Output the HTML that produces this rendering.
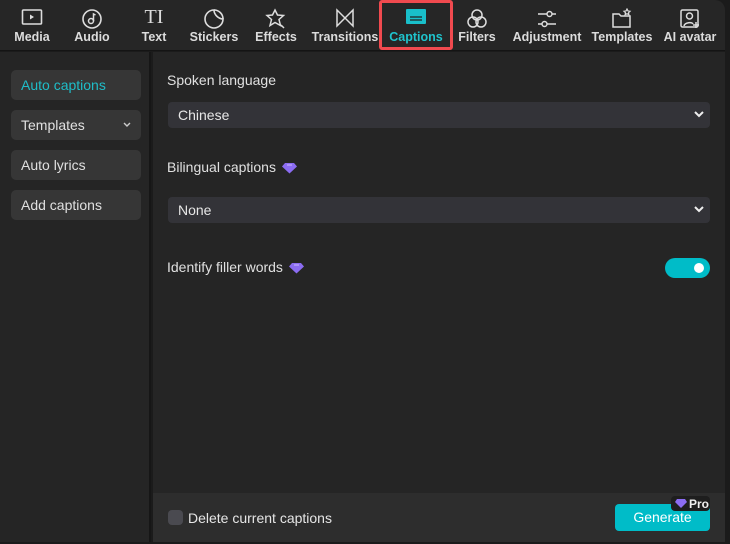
<!DOCTYPE html>
<html><head><meta charset="utf-8"><style>
*{margin:0;padding:0;box-sizing:border-box}
body{width:730px;height:544px;background:#1b1b1b;font-family:"Liberation Sans",Arial,sans-serif;position:relative;overflow:hidden;color:#e6e6e6}
.top{position:absolute;left:0;top:0;width:725px;height:51px;background:#262626;border-top-right-radius:10px;border-bottom:1px solid #141414}
.tab{position:absolute;top:0;height:51px;text-align:center;font-size:12.5px;font-weight:bold;color:#dcdcdc}
.tab svg{position:absolute;left:50%;top:8px;transform:translateX(-50%)}
.tab span{position:absolute;top:30px;left:0;right:0;white-space:nowrap}
.side{position:absolute;left:0;top:52px;width:151px;height:490px;background:#252525;border-right:2px solid #161616}
.sb{position:absolute;left:11px;width:130px;height:30px;background:#363636;border-radius:5px;font-size:14px;padding:7px 0 0 10px;color:#e0e0e0}
.main{position:absolute;left:153px;top:52px;width:572px;height:441px;background:#252525}
.lbl{position:absolute;left:14px;font-size:14px;color:#e0e0e0}
.sel{position:absolute;left:15px;width:542px;height:26px;background:#333338;border-radius:4px;font-size:14px;padding:5px 0 0 10px;color:#e6e6e6}
.sel svg{position:absolute;right:6px;top:9px}
.bot{position:absolute;left:153px;top:493px;width:572px;height:49px;background:#2d2d2d}
.gem{display:inline-block;vertical-align:middle;margin-left:6px}
</style></head><body>
<div class="top">
 <div class="tab" style="left:9px;width:46px"><svg width="22" height="18" viewBox="0 0 22 18"><rect x="1.5" y="2" width="19" height="14" fill="none" stroke="#ddd" stroke-width="1.6" rx="1"/><path d="M9 6.5v5l4-2.5z" fill="#ddd"/></svg><span>Media</span></div>
 <div class="tab" style="left:70px;width:44px"><svg width="22" height="22" viewBox="0 0 22 22"><circle cx="11" cy="11" r="9" fill="none" stroke="#ddd" stroke-width="1.6"/><circle cx="10" cy="13" r="2.5" fill="none" stroke="#ddd" stroke-width="1.5"/><path d="M12.5 13V6l2 1" fill="none" stroke="#ddd" stroke-width="1.5"/></svg><span>Audio</span></div>
 <div class="tab" style="left:135px;width:38px"><span style="top:6px;font-family:'Liberation Serif',serif;font-weight:normal;font-size:20px">TI</span><span>Text</span></div>
 <div class="tab" style="left:188px;width:52px"><svg width="22" height="22" viewBox="0 0 22 22"><path d="M11 2a9 9 0 1 0 9 9c-4 0-9-4-9-9z" fill="none" stroke="#ddd" stroke-width="1.6"/><path d="M11 2c5 0 9 4 9 9" fill="none" stroke="#ddd" stroke-width="1.6"/></svg><span>Stickers</span></div>
 <div class="tab" style="left:253px;width:46px"><svg width="22" height="22" viewBox="0 0 22 22"><path d="M10 2l2.5 5 6 .5-4.5 4 1.5 6-5.5-3-5 3 1.5-6L2 7.5l5.5-.5z" fill="none" stroke="#ddd" stroke-width="1.5"/><path d="M16 17l3 3" stroke="#ddd" stroke-width="1.5"/></svg><span>Effects</span></div>
 <div class="tab" style="left:311px;width:68px"><svg width="22" height="20" viewBox="0 0 22 20"><path d="M3 2v16l16-16v16z" fill="none" stroke="#ddd" stroke-width="1.5"/></svg><span>Transitions</span></div>
 <div class="tab" style="left:379px;width:74px;height:50px;border:3px solid #f04a4f;border-radius:3px;color:#1fc3cc"><svg width="22" height="18" viewBox="0 0 22 18" style="top:5px"><rect x="1" y="1" width="20" height="15" fill="#19bfca" rx="1"/><path d="M5 9h12M5 12h12" stroke="#222" stroke-width="1.2"/></svg><span style="top:27px">Captions</span></div>
 <div class="tab" style="left:456px;width:42px"><svg width="22" height="22" viewBox="0 0 22 22"><circle cx="11" cy="7" r="5" fill="none" stroke="#ddd" stroke-width="1.5"/><circle cx="7" cy="14" r="5" fill="none" stroke="#ddd" stroke-width="1.5"/><circle cx="15" cy="14" r="5" fill="none" stroke="#ddd" stroke-width="1.5"/></svg><span>Filters</span></div>
 <div class="tab" style="left:511px;width:72px"><svg width="22" height="22" viewBox="0 0 22 22"><path d="M2 6h9M16 6h4M2 16h4M11 16h9" stroke="#ddd" stroke-width="1.5"/><circle cx="13.5" cy="6" r="2.5" fill="none" stroke="#ddd" stroke-width="1.5"/><circle cx="8.5" cy="16" r="2.5" fill="none" stroke="#ddd" stroke-width="1.5"/></svg><span>Adjustment</span></div>
 <div class="tab" style="left:590px;width:64px"><svg width="22" height="22" viewBox="0 0 22 22"><path d="M2 6h6l2 2h9v11H2z" fill="none" stroke="#ddd" stroke-width="1.5"/><path d="M16 1l1 2 2 .3-1.5 1.4.4 2-1.9-1-1.9 1 .4-2L13 3.3l2-.3z" fill="none" stroke="#ddd" stroke-width="1.2"/></svg><span>Templates</span></div>
 <div class="tab" style="left:662px;width:56px"><svg width="22" height="22" viewBox="0 0 22 22"><rect x="2" y="2" width="17" height="17" rx="1.5" fill="none" stroke="#ddd" stroke-width="1.5"/><circle cx="10.5" cy="8" r="3" fill="none" stroke="#ddd" stroke-width="1.5"/><path d="M5 18c1-4 8-4 9-2M17 14v6M14 17h6" fill="none" stroke="#ddd" stroke-width="1.5"/></svg><span>AI avatar</span></div>
</div>
<div class="side">
 <div class="sb" style="top:18px;color:#1fbdc8">Auto captions</div>
 <div class="sb" style="top:58px">Templates<svg style="position:absolute;right:10px;top:12px" width="8" height="6" viewBox="0 0 8 6"><path d="M1 1l3 3 3-3" fill="none" stroke="#ccc" stroke-width="1.4"/></svg></div>
 <div class="sb" style="top:98px">Auto lyrics</div>
 <div class="sb" style="top:138px">Add captions</div>
</div>
<div class="main">
 <div class="lbl" style="top:20px">Spoken language</div>
 <div class="sel" style="top:50px">Chinese<svg width="10" height="7" viewBox="0 0 10 7"><path d="M1 1l4 4 4-4" fill="none" stroke="#eee" stroke-width="2"/></svg></div>
 <div class="lbl" style="top:107px">Bilingual captions<svg class="gem" width="15" height="12" viewBox="0 0 15 12"><path d="M3 1h9l3 3.5-7.5 7L0 4.5z" fill="#8b6cf2"/><path d="M5 3h5" stroke="#cbb8ff" stroke-width="1"/></svg></div>
 <div class="sel" style="top:145px">None<svg width="10" height="7" viewBox="0 0 10 7"><path d="M1 1l4 4 4-4" fill="none" stroke="#eee" stroke-width="2"/></svg></div>
 <div class="lbl" style="top:207px">Identify filler words<svg class="gem" width="15" height="12" viewBox="0 0 15 12"><path d="M3 1h9l3 3.5-7.5 7L0 4.5z" fill="#8b6cf2"/><path d="M5 3h5" stroke="#cbb8ff" stroke-width="1"/></svg></div>
 <div style="position:absolute;left:512px;top:206px;width:45px;height:20px;background:#00bcc8;border-radius:10px"><div style="position:absolute;right:6px;top:5px;width:10px;height:10px;background:#fff;border-radius:50%"></div></div>
</div>
<div class="bot">
 <div style="position:absolute;left:15px;top:17px;width:15px;height:15px;background:#4a4a50;border-radius:4px"></div>
 <div style="position:absolute;left:35px;top:17px;font-size:14px;color:#e6e6e6">Delete current captions</div>
 <div style="position:absolute;left:462px;top:11px;width:95px;height:27px;background:#00bcc8;border-radius:4px;color:#fff;font-size:14px;text-align:center;padding-top:5px">Generate</div>
 <div style="position:absolute;left:671px;left:518px;top:3px;width:39px;height:15px;background:#1e1e1e;border-radius:4px;font-size:12px;font-weight:bold;color:#eee;padding:1px 0 0 18px"><svg style="position:absolute;left:4px;top:3px" width="12" height="9" viewBox="0 0 12 9"><path d="M2 0h8l2 3-6 6-6-6z" fill="#8b6cf2"/></svg>Pro</div>
</div>
</body></html>
